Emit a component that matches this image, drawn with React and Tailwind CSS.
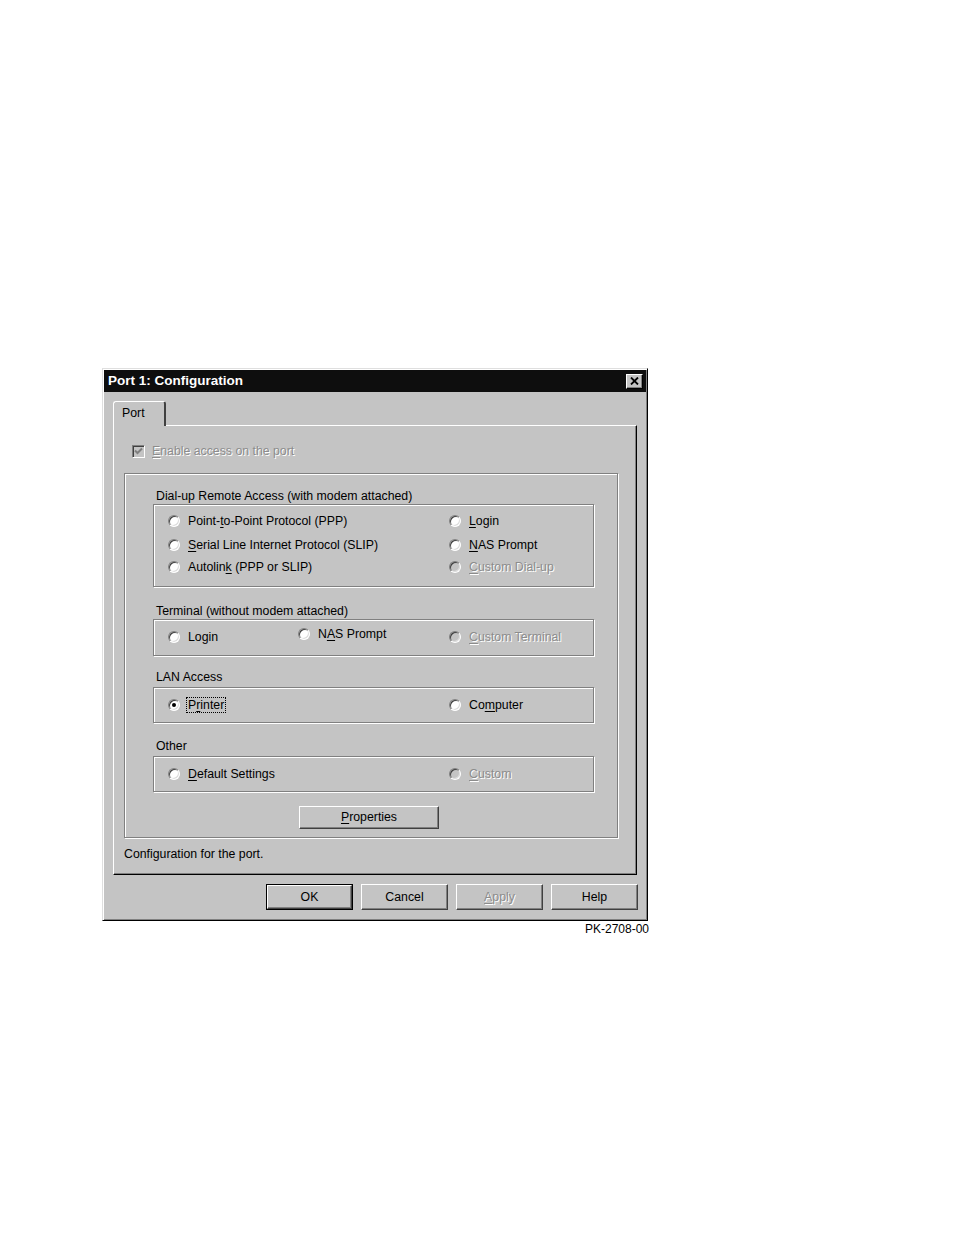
import React from 'react'

const font = { fontFamily: '"Liberation Sans", Arial, sans-serif' }

function U({ children }) {
  return <span className="underline underline-offset-[2px]">{children}</span>
}

function Radio({ checked, disabled, children, focus }) {
  return (
    <div className="flex items-center h-[16px]">
      <span className={`relative w-[12px] h-[12px] rounded-full border border-t-[#808080] border-l-[#808080] border-r-white border-b-white shadow-[inset_1px_1px_0_#404040,inset_-1px_-1px_0_#dcdcdc] ${disabled ? 'bg-[#c4c4c4]' : 'bg-white'}`}>
        {checked && <span className="absolute left-[3px] top-[3px] w-[4px] h-[4px] rounded-full bg-black" />}
      </span>
      <span
        className={`ml-[6px] leading-[14px] px-[1px] ${focus ? 'border border-dotted border-black' : 'border border-transparent'} ${disabled ? 'text-[#8c8c8c] [text-shadow:1px_1px_0_#ffffff]' : 'text-black'}`}
      >
        {children}
      </span>
    </div>
  )
}

function Button({ children, isDefault, disabled, className = '' }) {
  return (
    <div className={`${isDefault ? 'border border-black' : ''} ${className}`}>
      <div
        className={`h-full flex items-center justify-center border border-t-white border-l-white border-r-[#404040] border-b-[#404040] bg-[#c4c4c4] shadow-[inset_-1px_-1px_0_#808080] ${disabled ? 'text-[#8c8c8c] [text-shadow:1px_1px_0_#ffffff]' : 'text-black'}`}
      >
        {children}
      </div>
    </div>
  )
}

function Label({ children, className = '' }) {
  return <div className={`ml-[31px] h-[14px] leading-[14px] ${className}`}>{children}</div>
}

function Box({ children, className = '' }) {
  return (
    <div className={`ml-[28px] w-[441px] border border-[#808080] shadow-[inset_1px_1px_0_#ffffff,1px_1px_0_#ffffff] ${className}`}>
      {children}
    </div>
  )
}

export default function App() {
  return (
    <div className="w-[954px] h-[1235px] bg-white text-[12.3px] text-black" style={font}>
      <div className="pt-[368px] pl-[102px]">
        {/* dialog */}
        <div className="w-[546px] h-[553px] bg-[#c4c4c4] border border-t-[#dfdfdf] border-l-[#dfdfdf] border-r-black border-b-black p-[1px] shadow-[inset_1px_1px_0_#ffffff,inset_-1px_-1px_0_#808080]">
          <div className="h-[22px] bg-[#0e0e0e] flex items-center justify-between pl-[4px] pr-[3px]">
            <span className="text-white font-bold text-[13.5px] leading-none">Port 1: Configuration</span>
            <div className="w-[17px] h-[15px] bg-[#c4c4c4] border border-t-white border-l-white border-r-black border-b-black shadow-[inset_-1px_-1px_0_#808080] flex items-center justify-center">
              <svg width="9" height="8" viewBox="0 0 9 8">
                <path d="M1 0.5 L8 7.5 M8 0.5 L1 7.5" stroke="black" strokeWidth="1.8" />
              </svg>
            </div>
          </div>

          <div className="px-[9px] pt-[9px]">
            {/* tab */}
            <div className="relative z-10 w-[53px] h-[25px] -mb-[1px] bg-[#c4c4c4] border-t border-l border-white border-r-2 border-r-[#404040] rounded-t-[3px] flex items-center pl-[8px]">
              <span className="pb-[2px]">Port</span>
            </div>
            {/* panel */}
            <div className="w-[524px] h-[450px] border border-t-white border-l-white border-r-black border-b-black shadow-[inset_-1px_-1px_0_#808080]">
              <div className="mt-[18px] ml-[18px] flex items-center h-[14px]">
                <span className="w-[13px] h-[13px] bg-[#c4c4c4] border border-t-[#808080] border-l-[#808080] border-r-white border-b-white shadow-[inset_1px_1px_0_#404040] flex items-center justify-center">
                  <svg width="9" height="8" viewBox="0 0 9 8">
                    <path d="M1 3.5 L3.5 6 L8 1.5" fill="none" stroke="#808080" strokeWidth="2" />
                  </svg>
                </span>
                <span className="ml-[7px] text-[#8c8c8c] [text-shadow:1px_1px_0_#ffffff]">
                  <U>E</U>nable access on the port
                </span>
              </div>

              {/* group box */}
              <div className="mt-[15px] ml-[10px] w-[494px] h-[365px] border border-[#808080] shadow-[inset_1px_1px_0_#ffffff,1px_1px_0_#ffffff]">
                <Label className="mt-[15px]">Dial-up Remote Access (with modem attached)</Label>
                <Box className="mt-[1px] h-[83px] pt-[8px] pl-[14px]">
                  <div className="flex">
                    <div className="w-[281px]"><Radio>Point-<U>t</U>o-Point Protocol (PPP)</Radio></div>
                    <Radio><U>L</U>ogin</Radio>
                  </div>
                  <div className="flex mt-[8px]">
                    <div className="w-[281px]"><Radio><U>S</U>erial Line Internet Protocol (SLIP)</Radio></div>
                    <Radio><U>N</U>AS Prompt</Radio>
                  </div>
                  <div className="flex mt-[6px]">
                    <div className="w-[281px]"><Radio>Autolin<U>k</U> (PPP or SLIP)</Radio></div>
                    <Radio disabled><U>C</U>ustom Dial-up</Radio>
                  </div>
                </Box>

                <Label className="mt-[17px]">Terminal (without modem attached)</Label>
                <Box className="mt-[1px] h-[37px] pt-[9px] pl-[14px]">
                  <div className="flex">
                    <div className="w-[130px]"><Radio>Login</Radio></div>
                    <div className="w-[151px] -mt-[3px]"><Radio>N<U>A</U>S Prompt</Radio></div>
                    <Radio disabled><U>C</U>ustom Terminal</Radio>
                  </div>
                </Box>

                <Label className="mt-[14px]">LAN Access</Label>
                <Box className="mt-[3px] h-[36px] pt-[9px] pl-[14px]">
                  <div className="flex">
                    <div className="w-[281px]"><Radio checked focus>P<U>r</U>inter</Radio></div>
                    <Radio>Co<U>m</U>puter</Radio>
                  </div>
                </Box>

                <Label className="mt-[16px]">Other</Label>
                <Box className="mt-[3px] h-[36px] pt-[9px] pl-[14px]">
                  <div className="flex">
                    <div className="w-[281px]"><Radio><U>D</U>efault Settings</Radio></div>
                    <Radio disabled><U>C</U>ustom</Radio>
                  </div>
                </Box>

                <Button className="mt-[14px] ml-[174px] w-[140px] h-[23px]"><span><U>P</U>roperties</span></Button>
              </div>

              <div className="ml-[10px] mt-[9px] h-[14px] leading-[14px]">Configuration for the port.</div>
            </div>

            {/* bottom buttons */}
            <div className="flex justify-end gap-[8px] mt-[9px] -mr-[1px]">
              <Button isDefault className="w-[87px] h-[26px]">OK</Button>
              <Button className="w-[87px] h-[26px]">Cancel</Button>
              <Button disabled className="w-[87px] h-[26px]"><span><U>A</U>pply</span></Button>
              <Button className="w-[87px] h-[26px]">Help</Button>
            </div>
          </div>
        </div>
        <div className="w-[547px] text-right text-[12px] leading-[14px] mt-[1px]">PK-2708-00</div>
      </div>
    </div>
  )
}
